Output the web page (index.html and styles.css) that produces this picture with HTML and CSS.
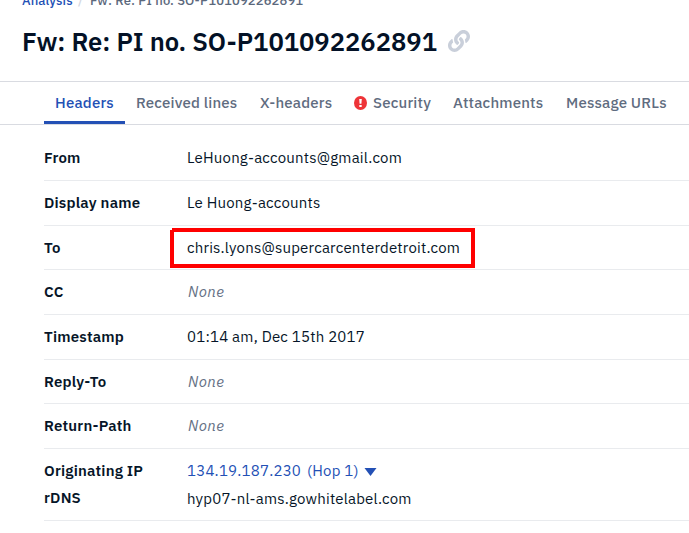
FILE: index.html
```html
<!DOCTYPE html>
<html lang="en">
<head>
<meta charset="utf-8">
<title>Message headers</title>
<link rel="stylesheet" href="styles.css">
</head>
<body>
<header class="page-header">
  <nav class="breadcrumb"><a class="crumb-link">Analysis</a><span class="separator">/</span><span class="crumb-current">Fw: Re: PI no. SO-P101092262891</span></nav>
  <div class="title-row">
    <h1>Fw: Re: PI no. SO-P101092262891</h1>
    <svg class="link-icon" viewBox="0 0 512 512"><path d="M326.612 185.391c59.747 59.809 58.927 155.698.36 214.59-.11.12-.24.25-.36.37l-67.2 67.2c-59.27 59.27-155.699 59.262-214.96 0-59.27-59.26-59.27-155.7 0-214.96l37.106-37.106c9.84-9.84 26.786-3.3 27.294 10.606.648 17.722 3.826 35.527 9.69 52.721 1.986 5.822.567 12.262-3.783 16.612l-13.087 13.087c-28.026 28.026-28.905 73.66-1.155 101.96 28.024 28.579 74.086 28.749 102.325.51l67.2-67.19c28.191-28.191 28.073-73.757 0-101.83-3.701-3.694-7.429-6.564-10.341-8.569a16.037 16.037 0 0 1-6.947-12.606c-.396-10.567 3.348-21.456 11.698-29.806l21.054-21.055c5.521-5.521 14.182-6.199 20.584-1.731a152.482 152.482 0 0 1 20.522 17.197zM467.547 44.449c-59.261-59.262-155.69-59.27-214.96 0l-67.2 67.2c-.12.12-.25.25-.36.37-58.566 58.892-59.387 154.781.36 214.59a152.454 152.454 0 0 0 20.521 17.196c6.402 4.468 15.064 3.789 20.584-1.731l21.054-21.055c8.35-8.35 12.094-19.239 11.698-29.806a16.037 16.037 0 0 0-6.947-12.606c-2.912-2.005-6.64-4.875-10.341-8.569-28.073-28.073-28.191-73.639 0-101.83l67.2-67.19c28.239-28.239 74.3-28.069 102.325.51 27.75 28.3 26.872 73.934-1.155 101.96l-13.087 13.087c-4.35 4.35-5.769 10.79-3.783 16.612 5.864 17.194 9.042 34.999 9.69 52.721.509 13.906 17.454 20.446 27.294 10.606l37.106-37.106c59.271-59.259 59.271-155.699.001-214.959z"/></svg>
  </div>
</header>
<nav class="tabs">
  <a class="tab active">Headers</a>
  <a class="tab">Received lines</a>
  <a class="tab">X-headers</a>
  <a class="tab"><svg class="alert-icon" viewBox="0 0 13 14"><ellipse cx="6.5" cy="7" rx="6.5" ry="7"/><path d="M5.2 3h2.6l-.4 4.8H5.6zM5.3 9h2.4v2.1H5.3z"/></svg>Security</a>
  <a class="tab">Attachments</a>
  <a class="tab">Message URLs</a>
</nav>
<main class="details">
  <div class="row"><b>From</b><span>LeHuong-accounts@gmail.com</span></div>
  <div class="row"><b>Display name</b><span>Le Huong-accounts</span></div>
  <div class="row marked"><b>To</b><span>chris.lyons@supercarcenterdetroit.com</span></div>
  <div class="row"><b>CC</b><i>None</i></div>
  <div class="row"><b>Timestamp</b><span>01:14 am, Dec 15th 2017</span></div>
  <div class="row"><b>Reply-To</b><i>None</i></div>
  <div class="row"><b>Return-Path</b><i>None</i></div>
  <div class="row origin">
    <b>Originating IP</b><span class="ip-link"><span class="ip">134.19.187.230</span><span class="hop">(Hop 1)</span><svg class="caret" viewBox="0 0 12 8"><path d="M0 0h12L6 8z"/></svg></span>
    <b>rDNS</b><span class="host">hyp07-nl-ams.gowhitelabel.com</span>
  </div>
</main>
</body>
</html>
```
FILE: styles.css
```css
*, *::after { box-sizing: border-box; }
body {
  margin: 0;
  height: 533px;
  overflow: hidden;
  background: #fff;
  color: #061528;
  font: 15px/20px "IBM Plex Sans", Roboto, sans-serif;
  white-space: nowrap;
}
.page-header { display: flow-root; height: 82px; border-bottom: 1px solid #d9dbe1; padding-left: 22px; }
.breadcrumb { display: flex; height: 20px; margin-top: -9px; font-size: 13px; font-weight: 500; letter-spacing: .12px; color: #5b687c; }
.crumb-link { width: 56px; color: #2350b5; }
.separator { width: 12px; color: #d3d7df; }
.title-row { display: flex; align-items: center; height: 40px; margin-top: 11px; }
h1 { width: 426px; margin: 0; font-size: 25.6px; line-height: 40px; font-weight: 600; letter-spacing: -.03px; color: #031126; }
.link-icon { width: 22px; height: 22px; margin-top: -2px; fill: #c9cfda; }
.tabs {
  display: grid;
  grid-template-columns: 81px 124px 94px 100px 113px 124px;
  height: 43px;
  padding-left: 44px;
  border-bottom: 1px solid #d9dbe1;
  font-weight: 500;
  letter-spacing: .19px;
  color: #5f6c80;
}
.tab { display: flex; align-items: center; height: 42px; padding-left: 11px; }
.tab:nth-child(n+5) { padding-left: 10px; }
.tab.active { border-bottom: 3px solid #2350b5; padding-top: 3px; color: #2350b5; }
.alert-icon { width: 13px; height: 14px; margin-right: 6px; fill: #ee3438; }
.alert-icon path { fill: #fff; }
.details { margin-left: 44px; padding-top: 11.3px; letter-spacing: .2px; }
.row {
  display: grid;
  grid-template-columns: 143px 1fr;
  align-items: center;
  height: 44.67px;
  padding-top: .3px;
  border-bottom: 1px solid #e9ebee;
}
.row b { font-weight: 600; }
.row i { padding-left: 1px; letter-spacing: .4px; color: #657185; }
.marked { position: relative; }
.marked::after {
  content: "";
  position: absolute;
  left: 126px;
  top: 2.36px;
  width: 305px;
  height: 40px;
  border: 4px solid #f00;
  clip-path: polygon(2px 0, 100% 0, 100% 100%, 0 100%, 0 2px, 2px 2px);
}
.origin { height: 72px; padding: 9px 0 8px; grid-template-rows: 27px 27px; }
.ip-link { display: flex; align-items: center; color: #2350b5; }
.ip { width: 120px; }
.hop { width: 57px; }
.host { padding-top: 2px; }
.caret { width: 13px; height: 8px; margin-top: 1px; fill: #2350b5; }
```
